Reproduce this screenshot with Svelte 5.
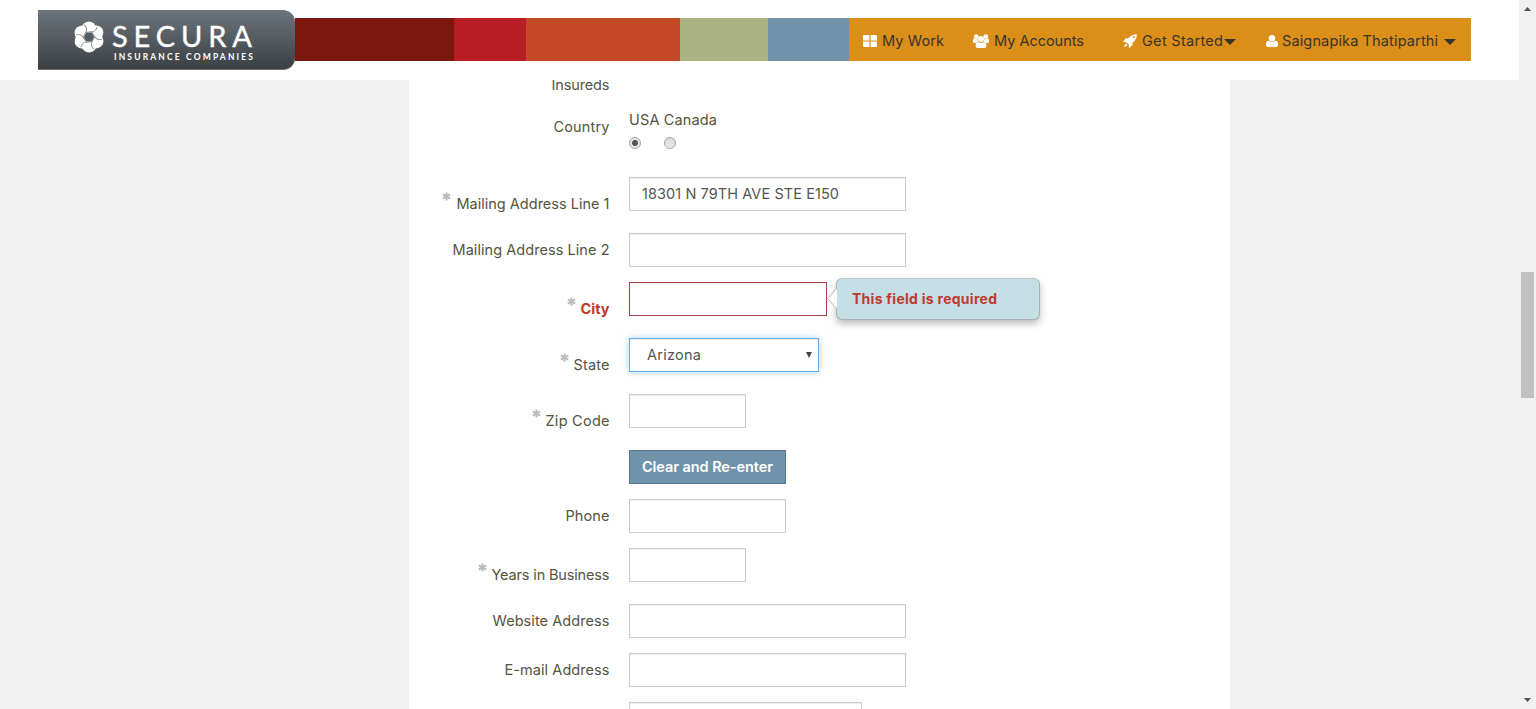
<script>
  // Tracks a run of text so that it fills the given width.
  function fit(node, width) {
    const natural = node.getBoundingClientRect().width;
    const spacing = (width - natural) / (node.textContent.length - 1);
    node.style.letterSpacing = `${spacing}px`;
    node.style.marginRight = `${-spacing}px`;
  }

  const stripes = [
    { color: '#7c170f', width: 159 },
    { color: '#b81c24', width: 72 },
    { color: '#c44a26', width: 154 },
    { color: '#acb382', width: 88 },
    { color: '#7093aa', width: 81 }
  ];

  const rows = [
    { label: 'Mailing Address Line 1', text: 153, required: true, width: 277, value: '18301 N 79TH AVE STE E150', valueText: 197 },
    { label: 'Mailing Address Line 2', text: 157, width: 277 },
    { label: 'City', text: 29, required: true, width: 198, error: 'This field is required' },
    { label: 'State', text: 36, required: true, width: 190, select: 'Arizona' },
    { label: 'Zip Code', text: 64, required: true, width: 117 },
    { button: 'Clear and Re-enter' },
    { label: 'Phone', text: 44, width: 157 },
    { label: 'Years in Business', text: 118, required: true, width: 117 },
    { label: 'Website Address', text: 117, width: 277 },
    { label: 'E-mail Address', text: 105, width: 277 },
    { label: '', width: 233 }
  ];
</script>

<div class="page">
  <div class="view">
    <header>
      <div class="logo">
        <svg class="mark" width="30" height="32" viewBox="-15 -16 30 32">
          {#each [0, 60, 120, 180, 240, 300] as a}
            <path d="M-7.500 -9.500Q-5.500 -15.300 0 -15.600Q5 -15.300 8 -9L4 -4H-4Z" fill="#fff" transform={`rotate(${a})`} />
          {/each}
          <path d="M-2.600 -4.500H2.600L5.200 0L2.600 4.500H-2.600L-5.200 0Z" fill="#555d63" />
          {#each [0, 60, 120, 180, 240, 300] as a}
            <path d="M-2.800 -4.700L4.600 -5.400Q7 -6.300 8.300 -10.200" fill="none" stroke="#7c8388" stroke-width=".9" transform={`rotate(${a})`} />
          {/each}
        </svg>
        <div class="words">
          <div class="name"><span use:fit={140}>SECURA</span></div>
          <div class="tag"><span use:fit={139}>INSURANCE COMPANIES</span></div>
        </div>
      </div>
      <div class="bar">
        {#each stripes as s}
          <i style={`width:${s.width}px;background:${s.color}`}></i>
        {/each}
        <nav>
          <a class="work" href="#work">
            <svg width="14" height="12" viewBox="0 0 14 12"><path fill="#fff" d="M1 0h5.4v5.4H0V1q0-1 1-1zM7.6 0H13q1 0 1 1v4.4H7.6zM0 6.6h6.4V12H1q-1 0-1-1zM7.6 6.6H14V11q0 1-1 1H7.6z" /></svg>
            <span class="t"><span use:fit={62}>My Work</span></span>
          </a>
          <a class="accounts" href="#accounts">
            <svg width="16" height="14" viewBox="0 0 16 14"><g fill="#fff"><circle cx="3.2" cy="2.5" r="2.3" /><circle cx="12.8" cy="2.5" r="2.3" /><path d="M0 8V6.2Q0 4.3 1.6 4.3q1.6 1 3 .2-.2 2 .9 3.3Q4 7.9 3.2 8.9H1.2Q0 8.9 0 8zM16 8V6.2q0-1.9-1.6-1.9-1.6 1-3 .2.2 2-.9 3.3 1.5.1 2.3 1.1h2Q16 8.9 16 8z" /><circle cx="8" cy="5" r="3" /><path d="M4.600 14Q2.600 14 2.600 12q0-4 2.600-4.100Q8 9.800 10.800 7.900q2.600.1 2.600 4.100 0 2-2 2z" /></g></svg>
            <span class="t"><span use:fit={90}>My Accounts</span></span>
          </a>
          <a class="start" href="#start">
            <svg width="14" height="14" viewBox="0 0 14 14"><path fill="#fff" fill-rule="evenodd" d="M13.8.2Q14 5.2 9.6 8.8L9.3 11.6 6 14 5.6 10.3 3.7 8.4 0 7.8 2.5 4.6 5.3 4.3Q8.8 0 13.8.2zM10.9 2.1a1 1 0 1 0 .1 2 1 1 0 0 0-.1-2zM3 9.5l1.6 1.6Q3.4 12.8 1 13 1.2 10.5 3 9.5z" /></svg>
            <span class="t"><span use:fit={81}>Get Started</span></span>
            <b class="caret"></b>
          </a>
          <a class="user" href="#user">
            <svg width="12" height="12" viewBox="0 0 12 12"><g fill="#fff"><circle cx="6" cy="3.2" r="3.2" /><path d="M2.1 12Q0 12 0 9.8q0-4 2.6-4.1Q6 8.5 9.4 5.7q2.6.1 2.6 4.1Q12 12 9.9 12z" /></g></svg>
            <span class="t"><span use:fit={156}>Saignapika Thatiparthi</span></span>
            <b class="caret"></b>
          </a>
        </nav>
      </div>
    </header>

    <main>
      <div class="row insureds"><label for="c0"><span use:fit={58}>Insureds</span></label></div>
      <div class="row country">
        <label for="c0"><span use:fit={56}>Country</span></label>
        <div class="choices">
          <div class="names"><span use:fit={88}>USA Canada</span></div>
          <div class="radios"><i class="radio on"></i><i class="radio"></i></div>
        </div>
      </div>
      {#each rows as r}
        <div class="row" class:required={r.required} class:invalid={r.error}>
          <label for="c0">
            {#if r.required}
              <svg class="star" width="9" height="9" viewBox="-4.5 -4.5 9 9"><path d="M0-4V4M-3.7-2.1 3.7 2.1M-3.7 2.1 3.7-2.1" stroke="#b9bbbb" stroke-width="2" /></svg>
            {/if}
            {#if r.label}<span use:fit={r.text}>{r.label}</span>{/if}
          </label>
          {#if r.button}
            <button type="button"><span use:fit={131}>{r.button}</span></button>
          {:else if r.select}
            <div class="field select" style={`width:${r.width}px`}><span use:fit={54}>{r.select}</span><b></b></div>
          {:else}
            <div class="field" style={`width:${r.width}px`}>
              {#if r.value}<span use:fit={r.valueText}>{r.value}</span>{/if}
              {#if r.error}
                <div class="tip">
                  <svg width="10" height="22" viewBox="0 0 10 22"><path d="M10 0 .7 10.500 10 21" fill="#fefefe" stroke="#b4b7b9" /></svg>
                  <span use:fit={145}>{r.error}</span>
                </div>
              {/if}
            </div>
          {/if}
        </div>
      {/each}
    </main>
  </div>
  <aside>
    <svg width="7" height="4" viewBox="0 0 7 4"><path d="M0 4 3.5 0 7 4z" fill="#505050" /></svg>
    <div class="thumb"></div>
    <svg width="7" height="4" viewBox="0 0 7 4"><path d="M0 0h7L3.5 4z" fill="#505050" /></svg>
  </aside>
</div>

<style>
  .page { display: flex; width: 1536px; height: 709px; overflow: hidden; background: #f1f1f1; font: 14.5px/20px Inter, sans-serif; color: #54543f; }
  .page span { white-space: nowrap; }
  .view { width: 1519px; height: 709px; overflow: hidden; }
  header { display: flex; align-items: flex-start; height: 80px; background: #fff; padding: 10px 0 0 38px; box-sizing: border-box; }
  .logo { display: flex; width: 257px; height: 60px; box-sizing: border-box; padding-left: 36px; border-radius: 0 12px 12px 0; background: linear-gradient(#6c757c, #3b4044); border-bottom: 1px solid #686d71; color: #fff; font-family: Lato, sans-serif; }
  .mark { margin-top: 11px; }
  .words { padding-left: 8px; }
  .name { height: 43px; font-size: 29px; line-height: 52px; -webkit-text-stroke: .4px #fff; }
  .tag { height: 10px; padding-left: 2px; font-size: 8.5px; font-weight: 700; line-height: 8px; }
  .bar { display: flex; height: 43px; margin-top: 8px; }
  .bar > i { height: 43px; }
  nav { display: flex; align-items: center; width: 622px; box-sizing: border-box; padding: 3px 0 0 14px; background: #db8e18; height: 43px; }
  nav a { display: flex; align-items: center; color: #38352f; text-decoration: none; }
  .t { display: block; }
  .work { gap: 5px; width: 110px; }
  .accounts { gap: 5px; width: 150px; }
  .start { gap: 5px; width: 143px; }
  .start .caret { margin-left: -4px; }
  .user { gap: 4px; }
  .user .caret { margin-left: 2px; }
  .caret { border: 6px solid transparent; border-top-color: #38352f; border-bottom: 0; margin-top: 2px; }
  main { width: 821px; height: 629px; margin-left: 409px; overflow: hidden; background: #fefefe; }
  .row { display: flex; height: 49px; gap: 19.5px; }
  .row.required { height: 56px; }
  .row > label { display: flex; width: 200.5px; box-sizing: border-box; justify-content: flex-end; padding-top: 7px; flex: none; }
  .row.required > label { padding-top: 17px; }
  .star { margin: -2px 5px 0 0; flex: none; }
  .row.insureds { height: 30px; }
  .row.insureds > label { padding-top: 0; margin-top: -5px; }
  .row.country { height: 67px; }
  .choices { display: flex; flex-direction: column; }
  .radios { display: flex; gap: 23px; padding-top: 7px; }
  .radio { width: 12px; height: 12px; box-sizing: border-box; border: 1px solid #a4a4a4; border-radius: 50%; background: linear-gradient(#d9d9d9, #eaeaea); }
  .radio.on { background: radial-gradient(circle, #555 0 2.7px, #e5e5e5 3.3px); }
  .field { position: relative; height: 34px; box-sizing: border-box; border: 1px solid #ccc; padding: 6px 12px; background: #fff; box-shadow: inset 0 1px 1px rgba(0, 0, 0, .075); color: #555; }
  .invalid label { color: #c0392f; font-weight: 700; }
  .invalid .field { border-color: #a94442; }
  .select { display: flex; justify-content: space-between; align-items: center; padding: 0 6px 0 17px; border-color: #66afe9; box-shadow: inset 0 1px 1px rgba(0, 0, 0, .075), 0 0 6px rgba(102, 175, 233, .55); }
  .select b { border: 3px solid transparent; border-top: 6px solid #444; border-bottom: 0; }
  button { height: 34px; width: 157px; padding: 0 0 0 12px; box-sizing: border-box; border: 1px solid #587890; background: #7093aa; color: #fff; font: 600 14.5px/20px Inter, sans-serif; text-align: left; }
  .tip { position: absolute; left: 206px; top: -5px; width: 204px; height: 42px; box-sizing: border-box; border: 1px solid #a9b1b4; border-top-color: #bbc5c9; border-radius: 6px; background: #c5dfe6; box-shadow: 0 4px 7px rgba(0, 0, 0, .25); padding: 10px 15px; color: #c0392f; font-weight: 700; font-size: 14px; }
  .tip svg { position: absolute; left: -10px; top: 9px; }
  aside { display: flex; flex-direction: column; align-items: center; width: 17px; height: 709px; box-sizing: border-box; padding: 7px 0; background: #f1f1f1; }
  .thumb { width: 13px; height: 126px; margin: 261px 0 300px; background: #c1c1c1; }
</style>
